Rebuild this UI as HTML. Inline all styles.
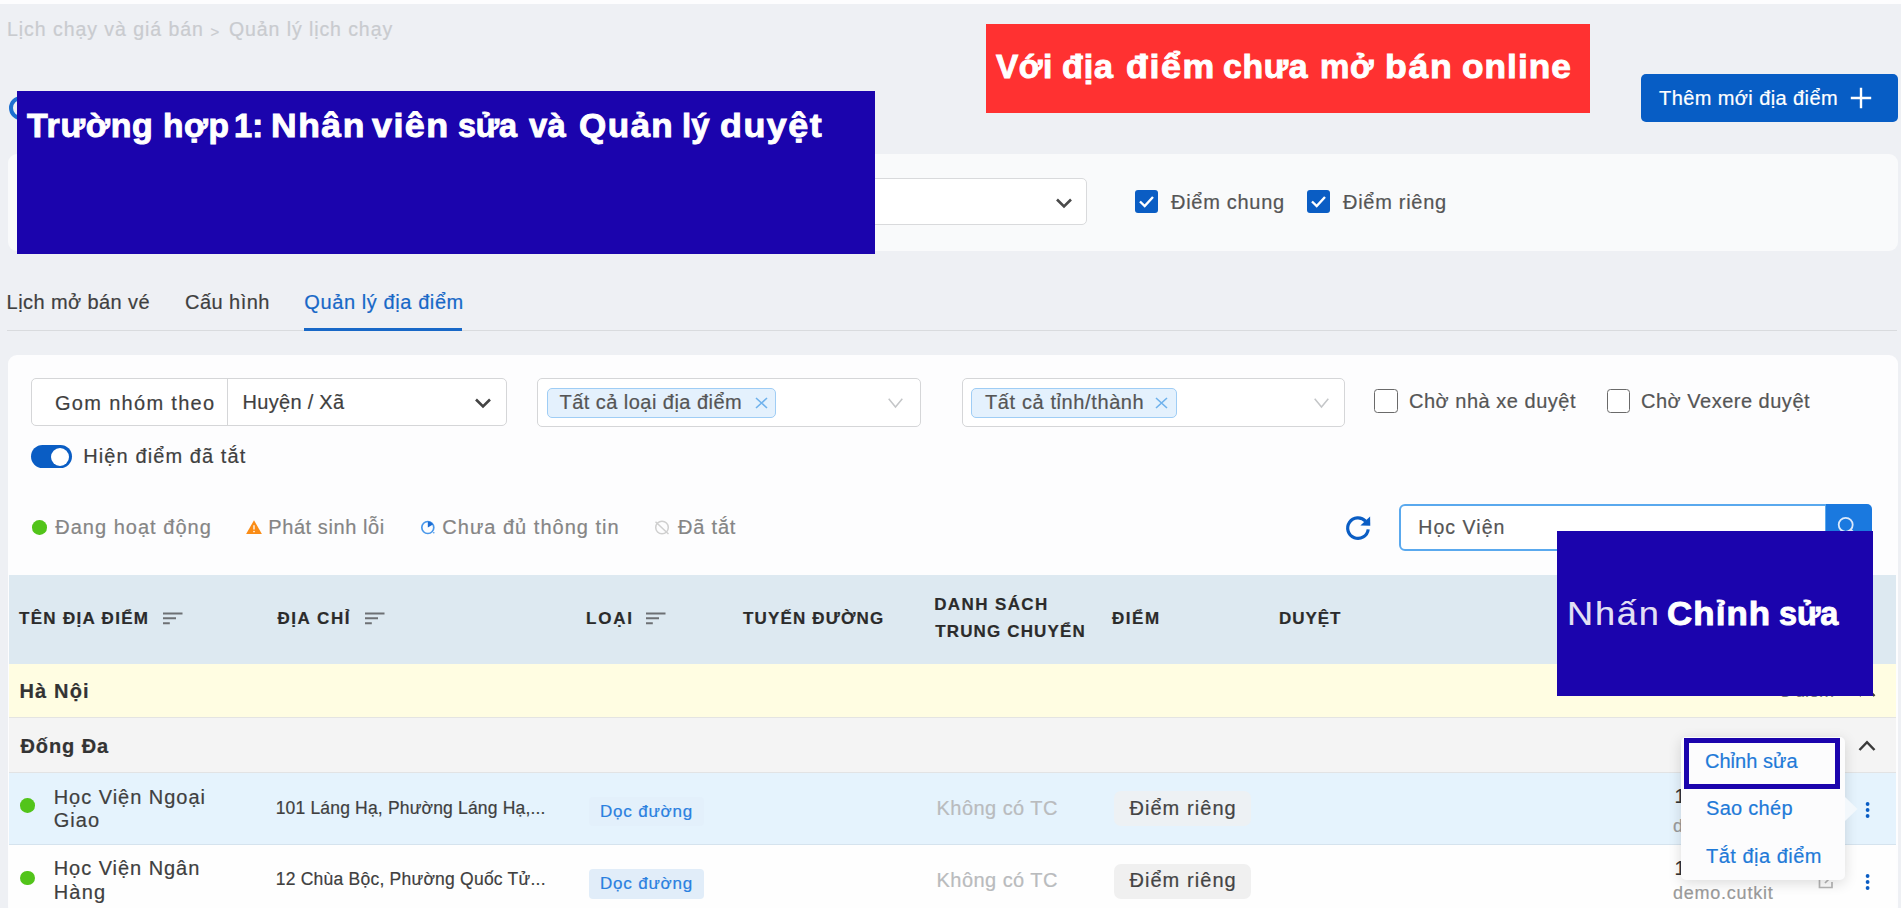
<!DOCTYPE html>
<html><head><meta charset="utf-8"><title>Quản lý địa điểm</title>
<style>
html,body{margin:0;padding:0}
body{width:1901px;height:908px;overflow:hidden;background:#eef0f4;font-family:"Liberation Sans", sans-serif;position:relative}
.a{position:absolute;box-sizing:border-box}
.t{position:absolute;white-space:pre;font-family:"Liberation Sans", sans-serif;-webkit-text-stroke:0.2px}
svg{position:absolute;overflow:visible}
</style></head><body>
<!-- top white strip -->
<div class="a" style="left:0;top:0;width:1901px;height:4.3px;background:#fdfdfe"></div>
<!-- Q peek -->
<div class="a" style="left:8.5px;top:96px;width:24px;height:24px;border:4px solid #1c6fd0;border-radius:50%"></div>
<!-- add button -->
<div class="a" style="left:1640.5px;top:73.7px;width:257px;height:48px;background:#075dc5;border-radius:5px"></div>
<svg style="left:1850px;top:86.5px" width="22" height="22"><path d="M11 0.8V21.2M0.8 11H21.2" stroke="#fff" stroke-width="2.4" fill="none"/></svg>
<!-- filter panel -->
<div class="a" style="left:8px;top:154px;width:1889.5px;height:97px;background:#f9fafb;border-radius:9px"></div>
<div class="a" style="left:600px;top:178px;width:487px;height:47px;background:#fff;border:1px solid #d9dadc;border-radius:5px"></div>
<svg style="left:1055px;top:197px" width="18" height="12"><path d="M2 2.5L9 9.5L16 2.5" stroke="#4a4a4a" stroke-width="2.6" fill="none"/></svg>
<div class="a" style="left:1134.8px;top:190px;width:23px;height:23px;background:#0a5dc4;border-radius:3px"></div>
<svg style="left:1134.8px;top:190px" width="23" height="23"><path d="M5 11.5L9.7 16L18 7" stroke="#fff" stroke-width="2.4" fill="none"/></svg>
<div class="a" style="left:1307px;top:190px;width:23px;height:23px;background:#0a5dc4;border-radius:3px"></div>
<svg style="left:1307px;top:190px" width="23" height="23"><path d="M5 11.5L9.7 16L18 7" stroke="#fff" stroke-width="2.4" fill="none"/></svg>
<!-- tabs line -->
<div class="a" style="left:7px;top:329.5px;width:1890px;height:1.5px;background:#d9dbde"></div>
<div class="a" style="left:304px;top:328px;width:158px;height:3px;background:#1868c7"></div>
<!-- main card -->
<div class="a" style="left:8px;top:355px;width:1889.5px;height:560px;background:#fdfdfe;border-radius:9px"></div>
<!-- group select -->
<div class="a" style="left:31px;top:378px;width:476px;height:48px;background:#fff;border:1px solid #d5d6d8;border-radius:5px"></div>
<div class="a" style="left:226.5px;top:378px;width:1px;height:48px;background:#d5d6d8"></div>
<svg style="left:474px;top:397px" width="18" height="12"><path d="M2 2.5L9 9.5L16 2.5" stroke="#444" stroke-width="2.6" fill="none"/></svg>
<!-- multiselect 1 -->
<div class="a" style="left:537px;top:378px;width:384px;height:49px;background:#fff;border:1px solid #d5d6d8;border-radius:5px"></div>
<div class="a" style="left:546.5px;top:388px;width:229px;height:29.5px;background:#e4f1fd;border:1px solid #9fcdf5;border-radius:5px"></div>
<svg style="left:754.5px;top:397px" width="13" height="12"><path d="M1 1L12 11M12 1L1 11" stroke="#6eb1ec" stroke-width="1.6" fill="none"/></svg>
<svg style="left:887.5px;top:398px" width="15" height="10"><path d="M0.7 0.7L7.5 9L14.3 0.7" stroke="#c4c6c8" stroke-width="1.5" fill="none"/></svg>
<!-- multiselect 2 -->
<div class="a" style="left:961.5px;top:378px;width:383.5px;height:49px;background:#fff;border:1px solid #d5d6d8;border-radius:5px"></div>
<div class="a" style="left:971px;top:388px;width:206px;height:29.5px;background:#e4f1fd;border:1px solid #9fcdf5;border-radius:5px"></div>
<svg style="left:1155px;top:397px" width="13" height="12"><path d="M1 1L12 11M12 1L1 11" stroke="#6eb1ec" stroke-width="1.6" fill="none"/></svg>
<svg style="left:1313.5px;top:398px" width="15" height="10"><path d="M0.7 0.7L7.5 9L14.3 0.7" stroke="#c4c6c8" stroke-width="1.5" fill="none"/></svg>
<!-- checkboxes -->
<div class="a" style="left:1374.4px;top:389.2px;width:23.5px;height:23.5px;background:#fff;border:1.6px solid #6a6a6a;border-radius:3.5px"></div>
<div class="a" style="left:1606.5px;top:389.2px;width:23.5px;height:23.5px;background:#fff;border:1.6px solid #6a6a6a;border-radius:3.5px"></div>
<!-- toggle -->
<div class="a" style="left:31px;top:445px;width:41px;height:23px;background:#0a5dc4;border-radius:12px"></div>
<div class="a" style="left:50.5px;top:447.5px;width:18px;height:18px;background:#fff;border-radius:50%"></div>
<!-- status icons -->
<div class="a" style="left:32.4px;top:520.3px;width:14.6px;height:14.6px;background:#52c41a;border-radius:50%"></div>
<svg style="left:245.7px;top:520px" width="16" height="14"><path d="M8 0.3L15.9 14H0.1Z" fill="#fa8c16"/><path d="M8 5.2V9.6" stroke="#fff" stroke-width="1.3"/><circle cx="8" cy="11.6" r="0.8" fill="#fff"/></svg>
<svg style="left:420.4px;top:520.4px" width="16" height="15"><circle cx="7.8" cy="7.5" r="6" stroke="#4a98ea" stroke-width="1.7" fill="none"/><path d="M7.8 7.5V1.5A6 6 0 0 1 13 4.6Z" fill="#1c6dd4"/><circle cx="13.8" cy="12.8" r="0.8" fill="#4a98ea"/></svg>
<svg style="left:654.3px;top:519.5px" width="16" height="15"><circle cx="8" cy="7.5" r="6.3" stroke="#cfcfcf" stroke-width="1.5" fill="none"/><path d="M1.5 1.8L14.5 14" stroke="#cfcfcf" stroke-width="1.5"/></svg>
<!-- refresh -->
<svg style="left:1345px;top:514.5px" width="27" height="26"><path d="M20.6 6.2A10.3 10.3 0 1 0 23.2 14.4" stroke="#0a5dc4" stroke-width="3.2" fill="none"/><path d="M15.4 10.6L25.3 10.8L25.1 1.4Z" fill="#0a5dc4"/></svg>
<!-- search -->
<div class="a" style="left:1399px;top:504px;width:428px;height:46.5px;background:#fff;border:2px solid #5aa9ee;border-radius:6px 0 0 6px"></div>
<div class="a" style="left:1825.5px;top:504px;width:46.5px;height:46.5px;background:#1a79df;border-radius:0 5px 5px 0"></div>
<svg style="left:1835px;top:514px" width="24" height="24"><circle cx="10.7" cy="10.8" r="7" stroke="#dbe9fb" stroke-width="1.8" fill="none"/><path d="M15.8 15.8L21 21" stroke="#dbe9fb" stroke-width="2"/></svg>
<!-- table header -->
<div class="a" style="left:8.5px;top:575px;width:1887px;height:89.3px;background:#dde9f1"></div>
<svg style="left:163.3px;top:611.5px" width="20" height="13"><path d="M0 1.5H19.5M0 6.3H13M0 11.2H6.8" stroke="#6d7074" stroke-width="2"/></svg>
<svg style="left:365.3px;top:611.5px" width="20" height="13"><path d="M0 1.5H19.5M0 6.3H13M0 11.2H6.8" stroke="#6d7074" stroke-width="2"/></svg>
<svg style="left:645.8px;top:611.5px" width="20" height="13"><path d="M0 1.5H19.5M0 6.3H13M0 11.2H6.8" stroke="#6d7074" stroke-width="2"/></svg>
<!-- Ha Noi row -->
<div class="a" style="left:8.5px;top:664.3px;width:1887px;height:54px;background:#fffde2;border-bottom:1px solid #e4e4e2"></div>
<span class="t" style="left:1780px;top:681px;font-size:18px;color:#777">3 điểm</span>
<svg style="left:1857.5px;top:685.5px" width="18" height="12"><path d="M1.5 10L9 2.2L16.5 10" stroke="#3a3a3a" stroke-width="2.5" fill="none"/></svg>
<!-- Dong Da row -->
<div class="a" style="left:8.5px;top:718.3px;width:1887px;height:54.5px;background:#f4f4f4;border-bottom:1px solid #e2e3e4"></div>
<svg style="left:1857.5px;top:739.5px" width="18" height="12"><path d="M1.5 10L9 2.2L16.5 10" stroke="#3a3a3a" stroke-width="2.5" fill="none"/></svg>
<!-- row 1 -->
<div class="a" style="left:8.5px;top:772.8px;width:1887px;height:72.6px;background:#e5f3fd;border-bottom:1px solid #d5e3ee"></div>
<div class="a" style="left:20px;top:798.4px;width:14.6px;height:14.6px;background:#52c41a;border-radius:50%"></div>
<div class="a" style="left:588.7px;top:796.8px;width:115.5px;height:29.5px;background:#e3f0fb;border-radius:4px"></div>
<div class="a" style="left:1114.2px;top:790.5px;width:137px;height:35.2px;background:#edf1f4;border-radius:7px"></div>
<svg style="left:1864.8px;top:801.5px" width="6" height="16"><circle cx="2.6" cy="2" r="1.9" fill="#0a5dc4"/><circle cx="2.6" cy="8" r="1.9" fill="#0a5dc4"/><circle cx="2.6" cy="14" r="1.9" fill="#0a5dc4"/></svg>
<!-- row 2 -->
<div class="a" style="left:8.5px;top:845.4px;width:1887px;height:70px;background:#fefefe"></div>
<div class="a" style="left:20px;top:870.8px;width:14.6px;height:14.6px;background:#52c41a;border-radius:50%"></div>
<div class="a" style="left:588.7px;top:869.4px;width:115.5px;height:29.5px;background:#e1edf9;border-radius:4px"></div>
<div class="a" style="left:1114.2px;top:863.5px;width:137px;height:35.4px;background:#f0f0f0;border-radius:7px"></div>
<svg style="left:1864.8px;top:873.5px" width="6" height="16"><circle cx="2.6" cy="2" r="1.9" fill="#0a5dc4"/><circle cx="2.6" cy="8" r="1.9" fill="#0a5dc4"/><circle cx="2.6" cy="14" r="1.9" fill="#0a5dc4"/></svg>
<svg style="left:1817px;top:874px" width="18" height="16"><path d="M11 2.5H2.5V13.5H15V8" stroke="#b5b5b5" stroke-width="1.7" fill="none"/><path d="M8 9L15.5 1.5" stroke="#b5b5b5" stroke-width="1.7"/></svg>
<!-- overlays -->
<div class="a" style="left:986px;top:23.6px;width:604.4px;height:89.2px;background:#ff3131;z-index:10"></div>
<div class="a" style="left:17.2px;top:90.6px;width:858.3px;height:163.5px;background:#1b04ad;z-index:10"></div>
<div class="a" style="left:1557px;top:530.7px;width:315.6px;height:165.2px;background:#1b04ad;z-index:10"></div>
<!-- dropdown -->
<div class="a" style="left:1680.8px;top:737px;width:164.2px;height:142.5px;background:#fcfcfd;border-radius:5px;box-shadow:0 3px 14px rgba(0,0,0,.14);z-index:12"></div>
<svg style="left:1844.5px;top:797px;z-index:12" width="14" height="24"><path d="M0 0L12.5 12L0 24Z" fill="#f3f8fc"/></svg>
<div class="a" style="left:1684px;top:737.5px;width:156px;height:51px;border:5px solid #1b04ad;z-index:13"></div>

<span class="t" style="left:7.0px;top:20.4px;font-size:19.5px;line-height:19.5px;font-weight:400;color:#c9cbcf;letter-spacing:0.951px;">Lịch chạy và giá bán</span>
<span class="t" style="left:210.5px;top:23.8px;font-size:15px;line-height:15px;font-weight:400;color:#c9cbcf;letter-spacing:0.000px;">></span>
<span class="t" style="left:229.0px;top:20.4px;font-size:19.5px;line-height:19.5px;font-weight:400;color:#c9cbcf;letter-spacing:0.916px;">Quản lý lịch chạy</span>
<span class="t" style="left:996.4px;top:50.9px;font-size:32.5px;line-height:32.5px;font-weight:700;color:#fff;letter-spacing:0.451px;transform:scaleX(1.0269);transform-origin:0 0;z-index:11;-webkit-text-stroke:0.9px #fff;">Với</span>
<span class="t" style="left:1062.0px;top:50.9px;font-size:32.5px;line-height:32.5px;font-weight:700;color:#fff;letter-spacing:0.746px;transform:scaleX(1.0501);transform-origin:0 0;z-index:11;-webkit-text-stroke:0.9px #fff;">địa</span>
<span class="t" style="left:1125.5px;top:50.9px;font-size:32.5px;line-height:32.5px;font-weight:700;color:#fff;letter-spacing:1.461px;transform:scaleX(1.0990);transform-origin:0 0;z-index:11;-webkit-text-stroke:0.9px #fff;">điểm</span>
<span class="t" style="left:1223.0px;top:50.9px;font-size:32.5px;line-height:32.5px;font-weight:700;color:#fff;letter-spacing:0.647px;transform:scaleX(1.0380);transform-origin:0 0;z-index:11;-webkit-text-stroke:0.9px #fff;">chưa</span>
<span class="t" style="left:1319.8px;top:50.9px;font-size:32.5px;line-height:32.5px;font-weight:700;color:#fff;letter-spacing:0.552px;transform:scaleX(1.0165);transform-origin:0 0;z-index:11;-webkit-text-stroke:0.9px #fff;">mở</span>
<span class="t" style="left:1385.3px;top:50.9px;font-size:32.5px;line-height:32.5px;font-weight:700;color:#fff;letter-spacing:1.565px;transform:scaleX(1.0954);transform-origin:0 0;z-index:11;-webkit-text-stroke:0.9px #fff;">bán</span>
<span class="t" style="left:1462.3px;top:50.9px;font-size:32.5px;line-height:32.5px;font-weight:700;color:#fff;letter-spacing:0.959px;transform:scaleX(1.0832);transform-origin:0 0;z-index:11;-webkit-text-stroke:0.9px #fff;">online</span>
<span class="t" style="left:27.4px;top:110.3px;font-size:32.5px;line-height:32.5px;font-weight:700;color:#fff;letter-spacing:0.666px;transform:scaleX(1.0453);transform-origin:0 0;z-index:11;-webkit-text-stroke:0.9px #fff;">Trường</span>
<span class="t" style="left:163.0px;top:110.3px;font-size:32.5px;line-height:32.5px;font-weight:700;color:#fff;letter-spacing:0.590px;transform:scaleX(1.0304);transform-origin:0 0;z-index:11;-webkit-text-stroke:0.9px #fff;">hợp</span>
<span class="t" style="left:233.7px;top:110.3px;font-size:32.5px;line-height:32.5px;font-weight:700;color:#fff;letter-spacing:0.090px;transform:scaleX(1.0056);transform-origin:0 0;z-index:11;-webkit-text-stroke:0.9px #fff;">1:</span>
<span class="t" style="left:270.6px;top:110.3px;font-size:32.5px;line-height:32.5px;font-weight:700;color:#fff;letter-spacing:1.431px;transform:scaleX(1.0907);transform-origin:0 0;z-index:11;-webkit-text-stroke:0.9px #fff;">Nhân</span>
<span class="t" style="left:372.3px;top:110.3px;font-size:32.5px;line-height:32.5px;font-weight:700;color:#fff;letter-spacing:1.319px;transform:scaleX(1.1037);transform-origin:0 0;z-index:11;-webkit-text-stroke:0.9px #fff;">viên</span>
<span class="t" style="left:457.5px;top:110.3px;font-size:32.5px;line-height:32.5px;font-weight:700;color:#fff;letter-spacing:-0.123px;transform:scaleX(0.9939);transform-origin:0 0;z-index:11;-webkit-text-stroke:0.9px #fff;">sửa</span>
<span class="t" style="left:529.1px;top:110.3px;font-size:32.5px;line-height:32.5px;font-weight:700;color:#fff;letter-spacing:0.248px;transform:scaleX(1.0101);transform-origin:0 0;z-index:11;-webkit-text-stroke:0.9px #fff;">và</span>
<span class="t" style="left:578.5px;top:110.3px;font-size:32.5px;line-height:32.5px;font-weight:700;color:#fff;letter-spacing:1.297px;transform:scaleX(1.0785);transform-origin:0 0;z-index:11;-webkit-text-stroke:0.9px #fff;">Quản</span>
<span class="t" style="left:682.2px;top:110.3px;font-size:32.5px;line-height:32.5px;font-weight:700;color:#fff;letter-spacing:0.186px;transform:scaleX(1.0113);transform-origin:0 0;z-index:11;-webkit-text-stroke:0.9px #fff;">lý</span>
<span class="t" style="left:720.1px;top:110.3px;font-size:32.5px;line-height:32.5px;font-weight:700;color:#fff;letter-spacing:1.345px;transform:scaleX(1.1037);transform-origin:0 0;z-index:11;-webkit-text-stroke:0.9px #fff;">duyệt</span>
<span class="t" style="left:1659.0px;top:87.5px;font-size:20px;line-height:20px;font-weight:400;color:#fff;letter-spacing:0.413px;">Thêm mới địa điểm</span>
<span class="t" style="left:1171.0px;top:192.3px;font-size:20px;line-height:20px;font-weight:400;color:#555;letter-spacing:0.712px;">Điểm chung</span>
<span class="t" style="left:1343.0px;top:192.3px;font-size:20px;line-height:20px;font-weight:400;color:#555;letter-spacing:0.714px;">Điểm riêng</span>
<span class="t" style="left:6.6px;top:291.7px;font-size:20px;line-height:20px;font-weight:400;color:#3f3f3f;letter-spacing:0.415px;">Lịch mở bán vé</span>
<span class="t" style="left:185.1px;top:291.7px;font-size:20px;line-height:20px;font-weight:400;color:#3f3f3f;letter-spacing:0.436px;">Cấu hình</span>
<span class="t" style="left:304.3px;top:291.7px;font-size:20px;line-height:20px;font-weight:400;color:#1868c7;letter-spacing:0.592px;">Quản lý địa điểm</span>
<span class="t" style="left:55.0px;top:392.9px;font-size:20px;line-height:20px;font-weight:400;color:#3f3f3f;letter-spacing:1.310px;">Gom nhóm theo</span>
<span class="t" style="left:242.5px;top:391.6px;font-size:20px;line-height:20px;font-weight:400;color:#3f3f3f;letter-spacing:0.298px;">Huyện / Xã</span>
<span class="t" style="left:559.5px;top:391.7px;font-size:20px;line-height:20px;font-weight:400;color:#555;letter-spacing:0.460px;">Tất cả loại địa điểm</span>
<span class="t" style="left:985.0px;top:391.7px;font-size:20px;line-height:20px;font-weight:400;color:#555;letter-spacing:0.609px;">Tất cả tỉnh/thành</span>
<span class="t" style="left:1409.0px;top:391.1px;font-size:20px;line-height:20px;font-weight:400;color:#555;letter-spacing:0.519px;">Chờ nhà xe duyệt</span>
<span class="t" style="left:1641.0px;top:391.1px;font-size:20px;line-height:20px;font-weight:400;color:#555;letter-spacing:0.505px;">Chờ Vexere duyệt</span>
<span class="t" style="left:83.3px;top:445.7px;font-size:20px;line-height:20px;font-weight:400;color:#3f3f3f;letter-spacing:1.088px;">Hiện điểm đã tắt</span>
<span class="t" style="left:55.2px;top:517.4px;font-size:20px;line-height:20px;font-weight:400;color:#858585;letter-spacing:1.021px;">Đang hoạt động</span>
<span class="t" style="left:268.3px;top:517.4px;font-size:20px;line-height:20px;font-weight:400;color:#858585;letter-spacing:0.574px;">Phát sinh lỗi</span>
<span class="t" style="left:442.3px;top:517.4px;font-size:20px;line-height:20px;font-weight:400;color:#858585;letter-spacing:1.010px;">Chưa đủ thông tin</span>
<span class="t" style="left:678.0px;top:517.4px;font-size:20px;line-height:20px;font-weight:400;color:#858585;letter-spacing:0.799px;">Đã tắt</span>
<span class="t" style="left:1418.3px;top:518.0px;font-size:19.5px;line-height:19.5px;font-weight:400;color:#555;letter-spacing:1.053px;">Học Viện</span>
<span class="t" style="left:1566.5px;top:597.5px;font-size:32.5px;line-height:32.5px;font-weight:400;color:rgba(255,255,255,.88);letter-spacing:1.641px;transform:scaleX(1.1115);transform-origin:0 0;z-index:11;">Nhấn</span>
<span class="t" style="left:1666.9px;top:597.5px;font-size:32.5px;line-height:32.5px;font-weight:700;color:#fff;letter-spacing:1.006px;transform:scaleX(1.0726);transform-origin:0 0;z-index:11;-webkit-text-stroke:0.9px #fff;">Chỉnh</span>
<span class="t" style="left:1779.2px;top:597.5px;font-size:32.5px;line-height:32.5px;font-weight:700;color:#fff;letter-spacing:-0.082px;transform:scaleX(0.9959);transform-origin:0 0;z-index:11;-webkit-text-stroke:0.9px #fff;">sửa</span>
<span class="t" style="left:19.0px;top:609.6px;font-size:17px;line-height:17px;font-weight:700;color:#2b2b2b;letter-spacing:1.313px;">TÊN ĐỊA ĐIỂM</span>
<span class="t" style="left:277.4px;top:609.6px;font-size:17px;line-height:17px;font-weight:700;color:#2b2b2b;letter-spacing:1.591px;">ĐỊA CHỈ</span>
<span class="t" style="left:586.0px;top:609.6px;font-size:17px;line-height:17px;font-weight:700;color:#2b2b2b;letter-spacing:1.772px;">LOẠI</span>
<span class="t" style="left:743.0px;top:609.6px;font-size:17px;line-height:17px;font-weight:700;color:#2b2b2b;letter-spacing:1.150px;">TUYẾN ĐƯỜNG</span>
<span class="t" style="left:934.2px;top:596.1px;font-size:17px;line-height:17px;font-weight:700;color:#2b2b2b;letter-spacing:1.385px;">DANH SÁCH</span>
<span class="t" style="left:935.2px;top:623.2px;font-size:17px;line-height:17px;font-weight:700;color:#2b2b2b;letter-spacing:1.148px;">TRUNG CHUYỂN</span>
<span class="t" style="left:1112.0px;top:609.6px;font-size:17px;line-height:17px;font-weight:700;color:#2b2b2b;letter-spacing:1.554px;">ĐIỂM</span>
<span class="t" style="left:1279.0px;top:609.6px;font-size:17px;line-height:17px;font-weight:700;color:#2b2b2b;letter-spacing:0.942px;">DUYỆT</span>
<span class="t" style="left:19.5px;top:681.1px;font-size:20px;line-height:20px;font-weight:700;color:#333;letter-spacing:1.143px;">Hà Nội</span>
<span class="t" style="left:20.5px;top:735.5px;font-size:20px;line-height:20px;font-weight:700;color:#333;letter-spacing:0.901px;">Đống Đa</span>
<span class="t" style="left:53.7px;top:786.9px;font-size:20px;line-height:20px;font-weight:400;color:#3f3f3f;letter-spacing:0.972px;">Học Viện Ngoại</span>
<span class="t" style="left:53.7px;top:810.1px;font-size:20px;line-height:20px;font-weight:400;color:#3f3f3f;letter-spacing:1.026px;">Giao</span>
<span class="t" style="left:275.7px;top:799.5px;font-size:17.5px;line-height:17.5px;font-weight:400;color:#3f3f3f;letter-spacing:0.173px;">101 Láng Hạ, Phường Láng Hạ,...</span>
<span class="t" style="left:600.0px;top:803.1px;font-size:17px;line-height:17px;font-weight:400;color:#2a80e0;letter-spacing:0.801px;">Dọc đường</span>
<span class="t" style="left:936.5px;top:798.1px;font-size:20px;line-height:20px;font-weight:400;color:#b9bbbd;letter-spacing:0.461px;">Không có TC</span>
<span class="t" style="left:1129.4px;top:798.2px;font-size:20px;line-height:20px;font-weight:400;color:#444;letter-spacing:1.069px;">Điểm riêng</span>
<span class="t" style="left:53.7px;top:858.4px;font-size:20px;line-height:20px;font-weight:400;color:#3f3f3f;letter-spacing:0.955px;">Học Viện Ngân</span>
<span class="t" style="left:53.7px;top:882.0px;font-size:20px;line-height:20px;font-weight:400;color:#3f3f3f;letter-spacing:1.204px;">Hàng</span>
<span class="t" style="left:275.7px;top:871.4px;font-size:17.5px;line-height:17.5px;font-weight:400;color:#3f3f3f;letter-spacing:0.229px;">12 Chùa Bộc, Phường Quốc Tử...</span>
<span class="t" style="left:600.0px;top:874.7px;font-size:17px;line-height:17px;font-weight:400;color:#2a80e0;letter-spacing:0.801px;">Dọc đường</span>
<span class="t" style="left:936.5px;top:870.4px;font-size:20px;line-height:20px;font-weight:400;color:#b9bbbd;letter-spacing:0.461px;">Không có TC</span>
<span class="t" style="left:1129.4px;top:870.4px;font-size:20px;line-height:20px;font-weight:400;color:#444;letter-spacing:1.069px;">Điểm riêng</span>
<span class="t" style="left:1673.0px;top:883.8px;font-size:18px;line-height:18px;font-weight:400;color:#9a9a9a;letter-spacing:0.766px;">demo.cutkit</span>
<span class="t" style="left:1674.5px;top:786.1px;font-size:20px;line-height:20px;font-weight:400;color:#333;letter-spacing:0.000px;">1</span>
<span class="t" style="left:1674.5px;top:858.1px;font-size:20px;line-height:20px;font-weight:400;color:#333;letter-spacing:0.000px;">1</span>
<span class="t" style="left:1673.0px;top:816.8px;font-size:18px;line-height:18px;font-weight:400;color:#9a9a9a;letter-spacing:0.000px;">d</span>
<span class="t" style="left:1705.0px;top:751.1px;font-size:20px;line-height:20px;font-weight:400;color:#1f7ad8;letter-spacing:0.025px;z-index:13;">Chỉnh sửa</span>
<span class="t" style="left:1706.0px;top:798.0px;font-size:20px;line-height:20px;font-weight:400;color:#1f7ad8;letter-spacing:0.287px;z-index:13;">Sao chép</span>
<span class="t" style="left:1706.0px;top:846.0px;font-size:20px;line-height:20px;font-weight:400;color:#1f7ad8;letter-spacing:0.492px;z-index:13;">Tắt địa điểm</span>
</body></html>
